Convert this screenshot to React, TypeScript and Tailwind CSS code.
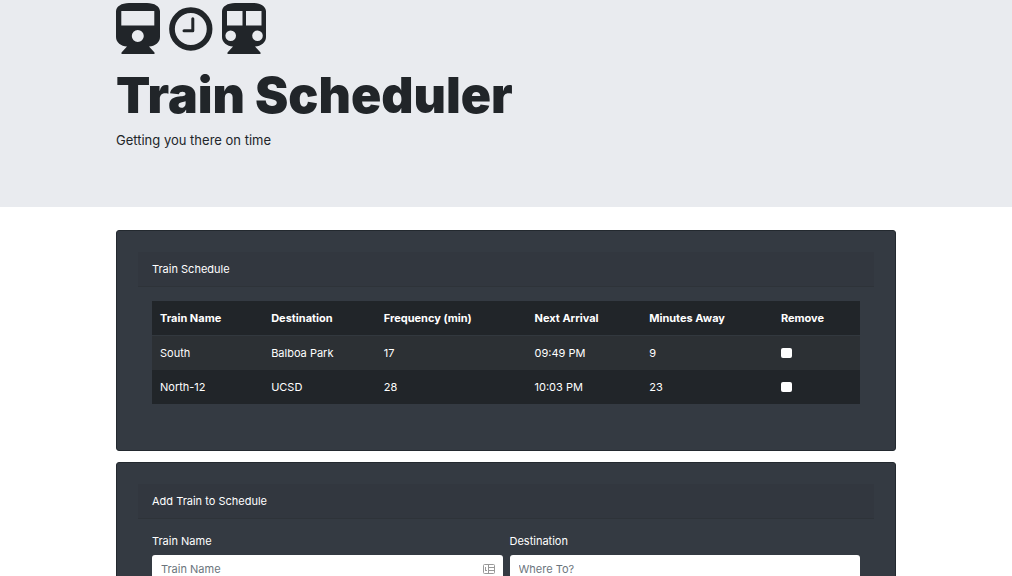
import React from "react";

function TrainIcon() {
  return (
    <svg width="44" height="51" viewBox="0 0 44 51" fill="currentColor" aria-hidden="true">
      <path
        fillRule="evenodd"
        d="M13 0H31C38.500 0 44 3.500 44 8.500V34C44 39.500 39 43.300 33 43.500L38.500 49.500V51H5.500V49.500L11 43.500C5 43.300 0 39.500 0 34V8.500C0 3.500 5.500 0 13 0ZM5.300 8V22.500H38.300V8ZM21.800 27a6 6 0 1 0 0 12a6 6 0 1 0 0-12Z"
      />
    </svg>
  );
}

function ClockIcon() {
  return (
    <svg width="44" height="51" viewBox="0 0 44 51" fill="none" stroke="currentColor" aria-hidden="true">
      <circle cx="21.800" cy="26" r="18.800" strokeWidth="5.700" />
      <path d="M23.800 15.700V27.800H15" strokeWidth="3" strokeLinecap="round" strokeLinejoin="round" />
    </svg>
  );
}

function SubwayIcon() {
  return (
    <svg width="44" height="51" viewBox="0 0 44 51" fill="currentColor" aria-hidden="true">
      <path
        fillRule="evenodd"
        d="M13 0H31C38.500 0 44 3.500 44 8.500V34C44 39.500 39 43.300 33 43.500L38.500 49.500V51H5.500V49.500L11 43.500C5 43.300 0 39.500 0 34V8.500C0 3.500 5.500 0 13 0ZM5 8V22.500H20.500V8ZM24 8V22.500H39.500V8ZM8.700 27.500a5.300 5.300 0 1 0 0 10.600a5.300 5.300 0 1 0 0-10.600ZM35.500 27.500a5.300 5.300 0 1 0 0 10.600a5.300 5.300 0 1 0 0-10.600Z"
      />
    </svg>
  );
}

function ContactCardIcon() {
  return (
    <svg width="12" height="10" viewBox="0 0 12 10" fill="none" stroke="currentColor" aria-hidden="true">
      <rect x="0.500" y="0.500" width="11" height="9" rx="1" />
      <path d="M5.500 0.500V9.500M5.500 3.500H11.500M5.500 6.500H11.500M2.500 3V6.500M2 6.500H4" />
    </svg>
  );
}

const columns = ["Train Name", "Destination", "Frequency (min)", "Next Arrival", "Minutes Away", "Remove"];

const trains = [
  { name: "South", destination: "Balboa Park", frequency: 17, next: "09:49 PM", away: 9 },
  { name: "North-12", destination: "UCSD", frequency: 28, next: "10:03 PM", away: 23 },
];

function Card({ title, children }: { title: string; children: React.ReactNode }) {
  return (
    <section className="rounded-[3px] border border-[#23292f] bg-[#343a42] px-[21px] pt-[21px] pb-8">
      <h2 className="border-b border-[#2e3339] bg-[#32373f] px-[14px] py-2 leading-[18px]">{title}</h2>
      <div className="p-[14px]">{children}</div>
    </section>
  );
}

function Field({ id, label, placeholder, icon }: { id: string; label: string; placeholder: string; icon?: React.ReactNode }) {
  return (
    <div className="flex flex-1 flex-col gap-[6px]">
      <label htmlFor={id}>{label}</label>
      <div className="flex h-[27px] items-center rounded-[3px] bg-white px-2 text-[#999999]">
        <input id={id} type="text" placeholder={placeholder} className="min-w-0 flex-1 bg-transparent pl-px text-[#495057] outline-none placeholder:text-[#6c757d]" />
        {icon}
      </div>
    </div>
  );
}

export default function App() {
  return (
    <div className="h-screen overflow-hidden bg-white font-['Inter',sans-serif] text-[11px] leading-4 text-white">
      <header className="bg-[#e9ebef] text-[#212529]">
        <div className="mx-auto max-w-[780px] pt-[3px] pb-14">
          <div className="flex gap-[9px]">
            <TrainIcon />
            <ClockIcon />
            <SubwayIcon />
          </div>
          <h1 className="mt-[11px] text-[50px] leading-[60px] font-black">Train Scheduler</h1>
          <p className="mt-[5px] text-[13px] leading-[21px]">Getting you there on time</p>
        </div>
      </header>
      <main className="mx-auto mt-[23px] flex max-w-[780px] flex-col gap-[11px]">
        <Card title="Train Schedule">
          <table className="w-full table-fixed text-left">
            <colgroup>
              <col className="w-[15.700%]" />
              <col className="w-[15.900%]" />
              <col className="w-[21.300%]" />
              <col className="w-[16.200%]" />
              <col className="w-[18.600%]" />
              <col />
            </colgroup>
            <thead className="bg-[#212529]">
              <tr className="h-[34px] border-b border-[#32383e]">
                {columns.map((c) => (
                  <th key={c} className="px-2 font-bold">{c}</th>
                ))}
              </tr>
            </thead>
            <tbody>
              {trains.map((t) => (
                <tr key={t.name} className="h-[34px] bg-[#212529] odd:h-[35px] odd:bg-[#2c3034]">
                  <td className="px-2">{t.name}</td>
                  <td className="px-2">{t.destination}</td>
                  <td className="px-2">{t.frequency}</td>
                  <td className="px-2">{t.next}</td>
                  <td className="px-2">{t.away}</td>
                  <td className="px-2">
                    <input type="checkbox" aria-label={`Remove ${t.name}`} className="block h-[10px] w-[11px] appearance-none rounded-[2px] bg-white checked:bg-[#0d6efd]" />
                  </td>
                </tr>
              ))}
            </tbody>
          </table>
        </Card>
        <Card title="Add Train to Schedule">
          <form className="flex gap-[7px]">
            <Field id="train-name" label="Train Name" placeholder="Train Name" icon={<ContactCardIcon />} />
            <Field id="destination" label="Destination" placeholder="Where To?" />
          </form>
        </Card>
      </main>
    </div>
  );
}
